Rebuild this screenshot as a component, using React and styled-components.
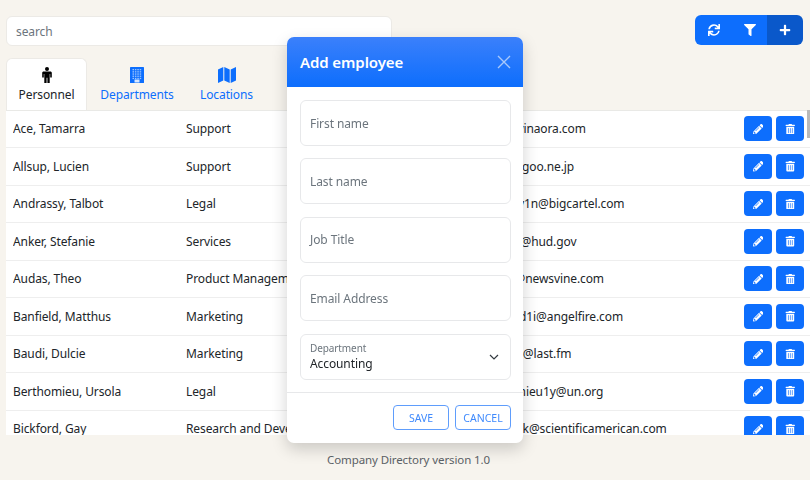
import React from "react";
import styled, { createGlobalStyle } from "styled-components";
import { FaSync, FaFilter, FaPlus, FaPencilAlt, FaTrashAlt } from "react-icons/fa";

const Global = createGlobalStyle`
  html, body { margin: 0; padding: 0; height: 100%; overflow: hidden; background: #f7f4ee; }
  * { box-sizing: border-box; }
  body { font-family: "Noto Sans", "Open Sans", sans-serif; font-size: 12px; letter-spacing: -0.1px; color: #212529; }
`;
const Page = styled.div`
  width: 810px; height: 480px; display: flex; flex-direction: column; padding-top: 15px; overflow: hidden;
`;
const TopBar = styled.div`
  display: flex; justify-content: space-between; align-items: flex-start; padding: 0 7px 0 6px; height: 43px;
`;
const Search = styled.input`
  width: 386px; height: 30px; margin-top: 1px; border: 1px solid #eceae6; border-radius: 6px; background: #fff;
  padding: 0 9px; font: inherit; letter-spacing: inherit; color: #212529;
  &::placeholder { color: #6c757d; opacity: 1; }
`;
const BtnGroup = styled.div`
  display: flex; width: 108px; height: 30px; border-radius: 6px; overflow: hidden;
`;
const GroupBtn = styled.button`
  width: ${p => p.$w}px; flex: none; border: 0; padding: 0; display: flex; align-items: center; justify-content: center; color: #fff;
  background: ${p => (p.$active ? "#0a58ca" : "#0d6efd")}; font-size: 12px;
`;
const Tabs = styled.div`
  display: flex; height: 52px; padding-left: 6px;
`;
const Tab = styled.div`
  width: ${p => p.$w}px; display: flex; flex-direction: column; align-items: center; padding-top: 8px;
  color: ${p => (p.$active ? "#212529" : "#0d6efd")};
  background: ${p => (p.$active ? "#fff" : "transparent")};
  border: 1px solid ${p => (p.$active ? "#eceae6" : "transparent")};
  border-bottom: 0; border-radius: 6px 6px 0 0; line-height: 16px;
  svg { display: block; margin-bottom: 4px; flex: none; }
`;
const TableWrap = styled.div`
  position: relative; height: 325px; margin-left: 6px; padding-top: 0.5px; background: #fff; overflow: hidden; box-shadow: inset 0 1px #e9e9e6;
`;
const Row = styled.div`
  display: grid; grid-template-columns: 173px 284px 1fr 60px; align-items: center;
  height: 37.5px; padding: 0 6px 0 7px; border-bottom: 1px solid #eeeeee; white-space: nowrap;
`;
const Cell = styled.div`
  overflow: hidden;
`;
const Actions = styled.div`
  display: flex; gap: 4px; justify-content: flex-end;
`;
const IconBtn = styled.button`
  width: 28px; height: 25px; border: 0; border-radius: 4px; padding: 0; background: #0d6efd; color: #fff;
  display: flex; align-items: center; justify-content: center; font-size: 10.5px;
`;
const Thumb = styled.div`
  position: absolute; top: 0; right: 0; width: 3px; height: 28px; background: #b9b9b9;
`;
const Footer = styled.div`
  flex: 1; display: flex; align-items: center; justify-content: center; color: #5c6267; padding: 3px 0 0 7px; font-size: 11.5px;
`;
const Modal = styled.div`
  position: fixed; left: 287px; top: 37px; width: 236px; height: 406px; background: #fff; border-radius: 7px;
  box-shadow: 0 6px 16px rgba(0,0,0,.18); display: flex; flex-direction: column; overflow: hidden;
`;
const ModalHead = styled.div`
  height: 50px; flex: none; display: flex; align-items: center; justify-content: space-between; padding: 0 12px 0 13px;
  background: linear-gradient(#3b80fb, #0d6efd); color: #fff;
`;
const Title = styled.div`
  font-size: 15px; font-weight: 600;
`;
const Close = styled.svg`
  width: 14px; height: 14px; stroke: #a9c9fb; stroke-width: 1.4; fill: none;
`;
const ModalBody = styled.div`
  flex: 1; padding: 13px 12px 0 13px; display: flex; flex-direction: column; gap: 12.4px;
`;
const Field = styled.div`
  height: 46px; flex: none; border: 1px solid #e7e8ea; border-radius: 6px; padding: 0 9px; display: flex; align-items: center;
  color: #6c757d;
`;
const SelectField = styled(Field)`
  justify-content: space-between; padding-right: 11px;
`;
const SelectText = styled.div`
  display: flex; flex-direction: column;
`;
const SelectLabel = styled.span`
  font-size: 10px; line-height: 14px; color: #6c757d;
`;
const SelectValue = styled.span`
  line-height: 17px; color: #212529;
`;
const ModalFoot = styled.div`
  height: 51px; flex: none; border-top: 1px solid #e7e8ea; display: flex; justify-content: flex-end; gap: 6px; padding: 12px 12px 0 0;
`;
const OutlineBtn = styled.button`
  width: 56px; height: 25px; padding: 0; border: 1px solid #5f9dfc; background: #fff; color: #3f8afd; border-radius: 4px;
  font: inherit; font-size: 10.5px; text-transform: uppercase;
`;

const PersonIcon = () => (
  <svg width="12" height="16" viewBox="0 0 12 16" fill="#000">
    <circle cx="6" cy="2" r="2" />
    <path d="M2.6 4.5h6.800c.8 0 1.400.6 1.400 1.400v4.600H9.200V7H8.700v9H6.400v-5.200h-.8V16H3.300V7h-.5v3.500H1.200V5.900c0-.8.6-1.400 1.400-1.400z" />
  </svg>
);
const BuildingIcon = () => {
  const dots = [];
  for (let y = 2; y < 11; y += 2.2) for (let x = 2.5; x < 11; x += 2.4) dots.push(<rect key={x + "-" + y} x={x} y={y} width="1.5" height="1.3" fill="#9cc4fe" />);
  return (
    <svg width="14" height="16" viewBox="0 0 14 16">
      <rect width="14" height="16" rx=".6" fill="#0d6efd" />
      {dots}
      <rect x="4.5" y="12.5" width="5" height="3" fill="#d7e7ff" />
    </svg>
  );
};
const MapIcon = () => (
  <svg width="18" height="16" viewBox="0 0 18 16" fill="#0d6efd">
    <path d="M0 2.600 5.300 0v13.400L0 16zM6.300 0l5.400 2.600V16l-5.400-2.600zM12.700 2.600 18 0v13.400L12.700 16z" />
  </svg>
);

const rows = [
  ["Ace, Tamarra", "Support", "tace12@vinaora.com"],
  ["Allsup, Lucien", "Support", "lallsupz@goo.ne.jp"],
  ["Andrassy, Talbot", "Legal", "tandrassy1n@bigcartel.com"],
  ["Anker, Stefanie", "Services", "sanker2k@hud.gov"],
  ["Audas, Theo", "Product Management", "taudas2@newsvine.com"],
  ["Banfield, Matthus", "Marketing", "mbanfield1i@angelfire.com"],
  ["Baudi, Dulcie", "Marketing", "dbaudi2n@last.fm"],
  ["Berthomieu, Ursola", "Legal", "uberthomieu1y@un.org"],
  ["Bickford, Gay", "Research and Development", "gbickfordk@scientificamerican.com"],
];

export default function App() {
  return (
    <Page>
      <Global />
      <TopBar>
        <Search placeholder="search" />
        <BtnGroup>
          <GroupBtn $w={37.5}><FaSync /></GroupBtn>
          <GroupBtn $w={34.5}><FaFilter /></GroupBtn>
          <GroupBtn $w={36} $active><FaPlus /></GroupBtn>
        </BtnGroup>
      </TopBar>
      <Tabs>
        <Tab $active $w={81}><PersonIcon />Personnel</Tab>
        <Tab $w={100}><BuildingIcon />Departments</Tab>
        <Tab $w={79}><MapIcon />Locations</Tab>
      </Tabs>
      <TableWrap>
        {rows.map(r => (
          <Row key={r[0]}>
            <Cell>{r[0]}</Cell>
            <Cell>{r[1]}</Cell>
            <Cell>{r[2]}</Cell>
            <Actions>
              <IconBtn><FaPencilAlt /></IconBtn>
              <IconBtn><FaTrashAlt /></IconBtn>
            </Actions>
          </Row>
        ))}
        <Thumb />
      </TableWrap>
      <Footer>Company Directory version 1.0</Footer>
      <Modal>
        <ModalHead>
          <Title>Add employee</Title>
          <Close viewBox="0 0 14 14"><path d="M1 1l12 12M13 1L1 13" /></Close>
        </ModalHead>
        <ModalBody>
          <Field>First name</Field>
          <Field>Last name</Field>
          <Field>Job Title</Field>
          <Field>Email Address</Field>
          <SelectField>
            <SelectText>
              <SelectLabel>Department</SelectLabel>
              <SelectValue>Accounting</SelectValue>
            </SelectText>
            <svg width="10" height="6" viewBox="0 0 10 6" fill="none" stroke="#343a40" strokeWidth="1.2"><path d="M1 1l4 4 4-4" /></svg>
          </SelectField>
        </ModalBody>
        <ModalFoot>
          <OutlineBtn>Save</OutlineBtn>
          <OutlineBtn>Cancel</OutlineBtn>
        </ModalFoot>
      </Modal>
    </Page>
  );
}
